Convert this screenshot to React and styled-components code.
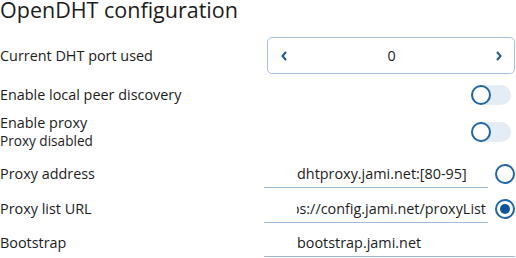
import React from "react";
import styled, { createGlobalStyle } from "styled-components";

const Global = createGlobalStyle`
  html, body { margin: 0; padding: 0; background: #ffffff; }
  body { font-family: "Open Sans", "Noto Sans", sans-serif; color: #1c1c1c; }
`;

const Page = styled.div`
  width: 516px;
  height: 258px;
  overflow: hidden;
  padding-right: 1px;
  box-sizing: border-box;
  display: flex;
  flex-direction: column;
`;

const Title = styled.h1`
  margin: -5px 0 0;
  font-size: 21.5px;
  font-weight: 400;
  line-height: 29px;
  height: 29px;
  white-space: nowrap;
`;

const Row = styled.div`
  display: flex;
  align-items: center;
  justify-content: space-between;
  height: ${(p) => p.$h}px;
  margin-top: ${(p) => p.$mt}px;
`;

const Label = styled.div`
  font-size: 14.4px;
  line-height: 18px;
`;

const LabelStack = styled.div`
  display: flex;
  flex-direction: column;
`;

const SubLabel = styled.div`
  font-size: 13.6px;
  line-height: 18px;
`;

const Spin = styled.div`
  width: 248px;
  height: 37px;
  box-sizing: border-box;
  border: 1px solid #a3c0dc;
  border-radius: 5px;
  display: flex;
  align-items: center;
  justify-content: space-between;
  padding: 0 11px 0 12px;
`;

const SpinValue = styled.span`
  font-size: 14.4px;
`;

const Chevron = ({ dir }) => (
  <svg width="8" height="10" viewBox="0 0 8 10">
    <path
      d={dir === "left" ? "M5.5 1.5 L2.5 5 L5.5 8.5" : "M2.5 1.5 L5.5 5 L2.5 8.5"}
      fill="none"
      stroke="#1b5d9d"
      strokeWidth="2"
      strokeLinecap="round"
      strokeLinejoin="round"
    />
  </svg>
);

const Track = styled.div`
  width: 40px;
  height: 20px;
  border-radius: 10px;
  background: #e4ecf5;
  margin-right: 4px;
  display: flex;
  align-items: center;
`;

const Knob = styled.div`
  width: 20px;
  height: 20px;
  box-sizing: border-box;
  border-radius: 50%;
  border: 2px solid #1f65a7;
  background: #ffffff;
`;

const Field = styled.div`
  display: flex;
  align-items: center;
`;

const Input = styled.div`
  width: ${(p) => p.$w}px;
  height: ${(p) => p.$h}px;
  box-sizing: border-box;
  border-bottom: 1px solid #9dbcda;
  padding: 0 2px 0 33px;
  display: flex;
  align-items: center;
  justify-content: ${(p) => (p.$end ? "flex-end" : "flex-start")};
  overflow: hidden;
  font-size: 14.4px;
  white-space: nowrap;
`;

const InputText = styled.span`
  flex: none;
`;

const Radio = styled.div`
  width: 20px;
  height: 20px;
  box-sizing: border-box;
  border-radius: 50%;
  border: 2px solid #1f65a7;
  margin-left: 7px;
  display: flex;
  align-items: center;
  justify-content: center;
  &::after {
    content: "";
    width: 10px;
    height: 10px;
    border-radius: 50%;
    background: ${(p) => (p.$checked ? "#0e5599" : "transparent")};
  }
`;

const Clip = styled.div`
  overflow: hidden;
  display: flex;
  justify-content: flex-end;
  width: 100%;
`;

export default function App() {
  return (
    <>
      <Global />
      <Page>
        <Title>OpenDHT configuration</Title>
        <Row $h={37} $mt={13}>
          <Label>Current DHT port used</Label>
          <Spin>
            <Chevron dir="left" />
            <SpinValue>0</SpinValue>
            <Chevron dir="right" />
          </Spin>
        </Row>
        <Row $h={20} $mt={11}>
          <Label>Enable local peer discovery</Label>
          <Track>
            <Knob />
          </Track>
        </Row>
        <Row $h={36} $mt={9}>
          <LabelStack>
            <Label>Enable proxy</Label>
            <SubLabel>Proxy disabled</SubLabel>
          </LabelStack>
          <Track>
            <Knob />
          </Track>
        </Row>
        <Row $h={29} $mt={9}>
          <Label>Proxy address</Label>
          <Field>
            <Input $w={224} $h={29}>
              <InputText>dhtproxy.jami.net:[80-95]</InputText>
            </Input>
            <Radio />
          </Field>
        </Row>
        <Row $h={28} $mt={7}>
          <Label>Proxy list URL</Label>
          <Field>
            <Input $w={224} $h={28} $end>
              <Clip>
                <InputText>https://config.jami.net/proxyList</InputText>
              </Clip>
            </Input>
            <Radio $checked />
          </Field>
        </Row>
        <Row $h={28} $mt={6}>
          <Label>Bootstrap</Label>
          <Input $w={251} $h={28}>
            <InputText>bootstrap.jami.net</InputText>
          </Input>
        </Row>
      </Page>
    </>
  );
}
